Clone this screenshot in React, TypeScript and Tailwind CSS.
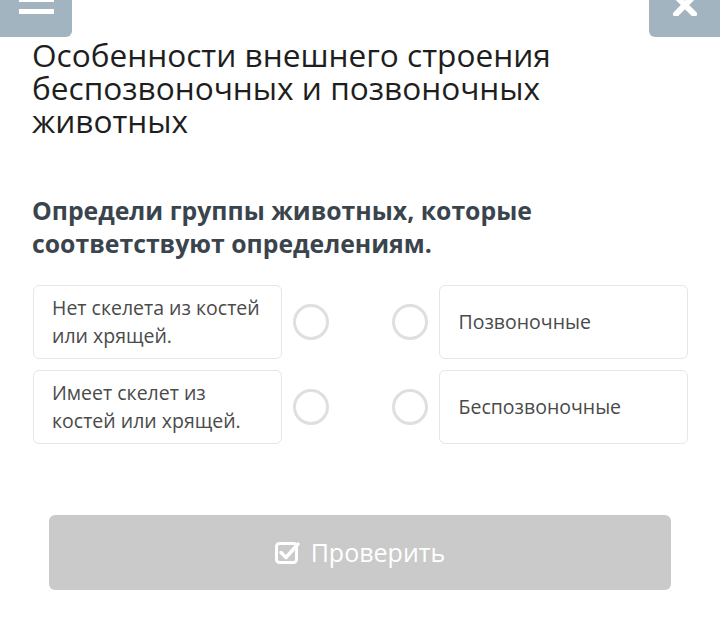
import React from "react";

const rows = [
  { left: "Нет скелета из костей или хрящей.", right: "Позвоночные" },
  { left: "Имеет скелет из костей или хрящей.", right: "Беспозвоночные" },
];

function Radio() {
  return <div className="w-[36px] h-[36px] rounded-full border-[3px] border-[#dfdfdf] bg-white shrink-0" />;
}

export default function App() {
  return (
    <div className="relative w-[720px] h-[628px] bg-white overflow-hidden" style={{ fontFamily: '"Open Sans", "Noto Sans", sans-serif' }}>
      {/* top overlay buttons */}
      <div className="absolute left-0 top-0 w-[72px] h-[37px] bg-[#a2b4c0] rounded-br-[6px] flex flex-col items-center gap-[7px]">
        <div className="w-[35px] h-[2px] bg-white" />
        <div className="w-[35px] h-[5px] bg-white" />
      </div>
      <div className="absolute right-0 top-0 w-[71px] h-[37px] bg-[#a2b4c0] rounded-bl-[6px] flex justify-center">
        <svg width="28" height="22" viewBox="0 0 28 22" className="-mt-[6px]">
          <path d="M5 2 L23 20 M23 2 L5 20" stroke="white" strokeWidth="6" strokeLinecap="round" />
        </svg>
      </div>

      <div className="pt-[38px] px-[32px]">
        <h1 className="text-[31.6px] leading-[33px] text-[#1e1e1e] font-normal w-[560px]">
          Особенности внешнего строения беспозвоночных и позвоночных животных
        </h1>
        <h2 className="mt-[57px] text-[24.8px] leading-[33px] font-bold text-[#3a444d] w-[540px]">
          Определи группы животных, которые соответствуют определениям.
        </h2>

        <div className="mt-[25px] flex flex-col gap-[11px]">
          {rows.map((r) => (
            <div key={r.right} className="flex items-center h-[74px]">
              <div className="ml-px w-[249px] h-full rounded-[6px] border border-[#e6e6e6] px-[18px] flex items-center text-[19.5px] leading-[28px] text-[#4a4a4a]">
                {r.left}
              </div>
              <div className="ml-[11px]"><Radio /></div>
              <div className="ml-[63px]"><Radio /></div>
              <div className="ml-[11px] w-[250px] h-full rounded-[6px] border border-[#e6e6e6] px-[19px] flex items-center text-[19.5px] leading-[28px] text-[#4a4a4a]">
                {r.right}
              </div>
            </div>
          ))}
        </div>
      </div>

      <div className="mt-[71px] mx-[49px] h-[75px] rounded-[6px] bg-[#cacaca] flex items-center justify-center gap-[10px] text-white text-[25px]">
        <svg width="26" height="24" viewBox="0 0 26 24">
          <rect x="1.5" y="2.5" width="20" height="19" rx="3" fill="none" stroke="white" strokeWidth="3" />
          <path d="M6 11.5 L11 16.5 L23 3" fill="none" stroke="white" strokeWidth="3.5" strokeLinecap="round" strokeLinejoin="round" />
        </svg>
        <span>Проверить</span>
      </div>
    </div>
  );
}
